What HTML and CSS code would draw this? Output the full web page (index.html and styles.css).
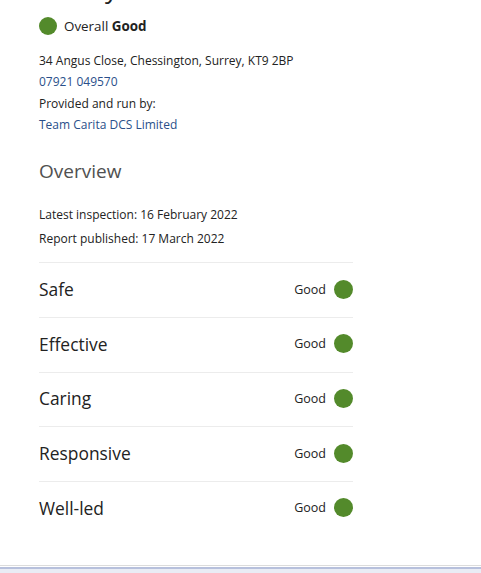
FILE: index.html
```html
<!DOCTYPE html>
<html lang="en">
<head>
<meta charset="utf-8">
<title>Overview</title>
<link rel="stylesheet" href="styles.css">
</head>
<body>
<main class="page">
  <h1 class="title">Surrey</h1>
  <div class="overall">
    <span class="dot dot-lg"></span>
    <span class="overall-text">Overall <b>Good</b></span>
  </div>
  <div class="info">
    <p>34 Angus Close, Chessington, Surrey, KT9 2BP</p>
    <p><a href="#">07921 049570</a></p>
    <p>Provided and run by:</p>
    <p><a href="#">Team Carita DCS Limited</a></p>
  </div>
  <h2 class="section-title">Overview</h2>
  <div class="dates">
    <p>Latest inspection: 16 February 2022</p>
    <p>Report published: 17 March 2022</p>
  </div>
  <ul class="ratings">
    <li class="rating"><span class="rating-name">Safe</span><span class="rating-val">Good <span class="dot"></span></span></li>
    <li class="rating"><span class="rating-name">Effective</span><span class="rating-val">Good <span class="dot"></span></span></li>
    <li class="rating"><span class="rating-name">Caring</span><span class="rating-val">Good <span class="dot"></span></span></li>
    <li class="rating"><span class="rating-name">Responsive</span><span class="rating-val">Good <span class="dot"></span></span></li>
    <li class="rating"><span class="rating-name">Well-led</span><span class="rating-val">Good <span class="dot"></span></span></li>
  </ul>
</main>
<footer class="bottom"></footer>
</body>
</html>
```
FILE: styles.css
```css
* { box-sizing: border-box; }
html, body { margin: 0; padding: 0; background: #fff; }
body {
  font-family: "Open Sans", "Noto Sans", sans-serif;
  color: #222;
  height: 573px;
  overflow: hidden;
  display: flex;
  flex-direction: column;
}
.page {
  padding: 0 39px;
  width: 392px;
  flex: 1;
}
.title {
  margin: -30px 0 0 0;
  font-size: 26px;
  font-weight: 400;
  line-height: 36px;
  height: 36px;
}
.overall {
  display: flex;
  align-items: center;
  gap: 7px;
  margin-top: 10px;
}
.overall-text { font-size: 13.4px; line-height: 20px; }
.overall-text b { font-weight: 700; }
.dot {
  display: inline-block;
  width: 19px;
  height: 19px;
  border-radius: 50%;
  background: #538a2b;
}
.dot-lg { width: 18px; height: 18px; }
.info { margin-top: 14px; }
.info p, .dates p {
  margin: 0;
  font-size: 12px;
  line-height: 21.3px;
}
.info a { color: #2a4f8a; text-decoration: none; }
.section-title {
  margin: 22px 0 0 0;
  font-size: 19px;
  font-weight: 400;
  color: #505050;
  line-height: 28px;
}
.dates { margin-top: 18px; }
.dates p { line-height: 24px; }
.ratings {
  list-style: none;
  margin: 11px 0 0 0;
  padding: 0;
  width: 314px;
}
.rating {
  display: flex;
  justify-content: space-between;
  align-items: center;
  height: 54.7px;
  padding-bottom: 2px;
  border-top: 1px solid #ececec;
}
.rating-name { font-size: 17.4px; }
.rating-val {
  display: flex;
  align-items: center;
  gap: 8px;
  font-size: 12.5px;
}
.bottom {
  height: 8px;
  border-top: 1px solid #dcdcdc;
  padding-top: 3px;
  background: #fff;
  box-shadow: inset 0 -4px 0 #e9ecf5, inset 0 -6px 0 #b7c0dc;
}
```
